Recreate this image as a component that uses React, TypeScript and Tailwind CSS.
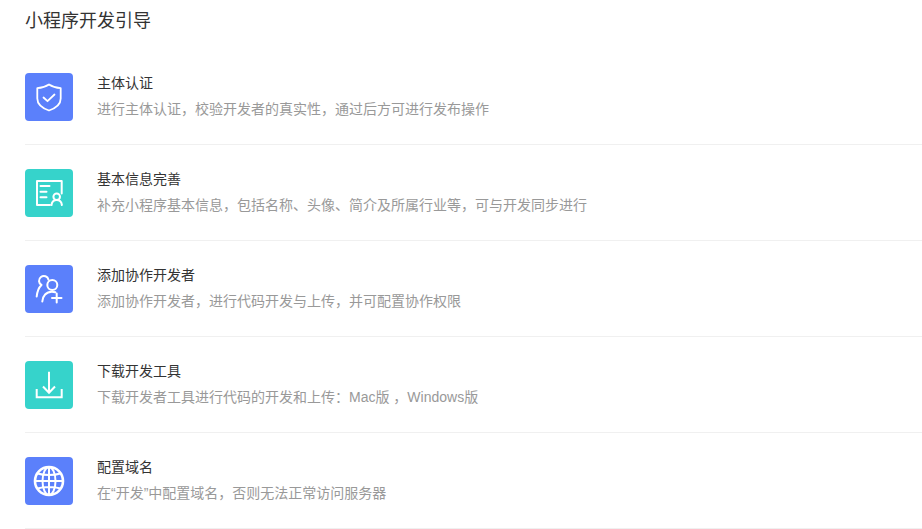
import React from "react";

const Shield = () => (
  <svg width="48" height="48" viewBox="0 0 48 48" fill="none" stroke="#fff" strokeWidth="1.800" strokeLinecap="round" strokeLinejoin="round">
    <path d="M24 11.500c3 2 7 3.300 11.700 3.700v10.300c0 5.500-4.500 9.500-11.700 12-7.200-2.500-11.700-6.500-11.700-12V15.200c4.700-.4 8.700-1.700 11.700-3.700z" />
    <path d="M18.500 24.500l4 3.700 7-6.700" />
  </svg>
);

const Card = () => (
  <svg width="48" height="48" viewBox="0 0 48 48" fill="none" stroke="#fff" strokeWidth="2" strokeLinecap="round" strokeLinejoin="round">
    <path d="M25 36H12V12h24.700v12.500" />
    <path d="M15.500 17h9M15.500 22.700h6M15.500 28.300h6" />
    <circle cx="31.700" cy="27.800" r="3.300" />
    <path d="M26.500 36c.4-3 2.300-5 5.200-5s4.800 2 5.200 5" />
  </svg>
);

const Users = () => (
  <svg width="48" height="48" viewBox="0 0 48 48" fill="none" stroke="#fff" strokeWidth="2" strokeLinecap="round" strokeLinejoin="round">
    <path d="M23.500 14.800a4.800 4.800 0 1 0-7 5.200c-2.700 2.500-4.300 6.500-4.800 11.500" />
    <circle cx="27.300" cy="20" r="5" />
    <path d="M17.300 36.500c.3-5.500 4-9.800 9.500-9.800 1.200 0 2.500.2 3.500.6" />
    <path d="M31.700 28.500v9M27 33h9.500" />
  </svg>
);

const Download = () => (
  <svg width="48" height="48" viewBox="0 0 48 48" fill="none" stroke="#fff" strokeWidth="2" strokeLinejoin="miter">
    <path d="M24 10.700v21" />
    <path d="M18 25.500l6 6.200 6-6.200" />
    <path d="M11.700 28v8.300h25V28" />
  </svg>
);

const Globe = () => (
  <svg width="48" height="48" viewBox="0 0 48 48" fill="none" stroke="#fff" strokeWidth="2">
    <circle cx="24" cy="24" r="14" strokeWidth="2.600" />
    <ellipse cx="24" cy="24" rx="6.500" ry="14" />
    <path d="M24 10v28M10 24h28M12.500 16.500c3 1 7 1.500 11.500 1.500s8.500-.5 11.500-1.500M12.500 31.500c3-1 7-1.500 11.500-1.500s8.500.5 11.500 1.500" />
  </svg>
);

const items = [
  { title: "主体认证", desc: "进行主体认证，校验开发者的真实性，通过后方可进行发布操作", icon: <Shield />, bg: "bg-[#5b80fb]" },
  { title: "基本信息完善", desc: "补充小程序基本信息，包括名称、头像、简介及所属行业等，可与开发同步进行", icon: <Card />, bg: "bg-[#36d3cb]" },
  { title: "添加协作开发者", desc: "添加协作开发者，进行代码开发与上传，并可配置协作权限", icon: <Users />, bg: "bg-[#5b80fb]" },
  { title: "下载开发工具", desc: "下载开发者工具进行代码的开发和上传：Mac版 ，Windows版", icon: <Download />, bg: "bg-[#36d3cb]" },
  { title: "配置域名", desc: "在“开发”中配置域名，否则无法正常访问服务器", icon: <Globe />, bg: "bg-[#5b80fb]" },
];

export default function App() {
  return (
    <div className="min-h-[529px] overflow-hidden bg-white pl-[25px] font-['Liberation_Sans','Noto_Sans_CJK_SC',sans-serif]">
      <h1 className="h-[49px] pt-[8px] text-[18px] leading-[26px] font-normal text-[#333]">小程序开发引导</h1>
      <div className="flex flex-col">
        {items.map((item) => (
          <div key={item.title} className="flex h-[96px] items-start border-b border-[#f0f0f0] pt-[24px]">
            <div className={`flex h-[48px] w-[48px] shrink-0 items-center justify-center rounded-[4px] ${item.bg}`}>
              {item.icon}
            </div>
            <div className="ml-[24px] flex flex-col">
              <div className="text-[14px] leading-[20px] text-[#333]">{item.title}</div>
              <div className="mt-[6px] text-[14px] leading-[20px] text-[#999]">{item.desc}</div>
            </div>
          </div>
        ))}
      </div>
    </div>
  );
}
